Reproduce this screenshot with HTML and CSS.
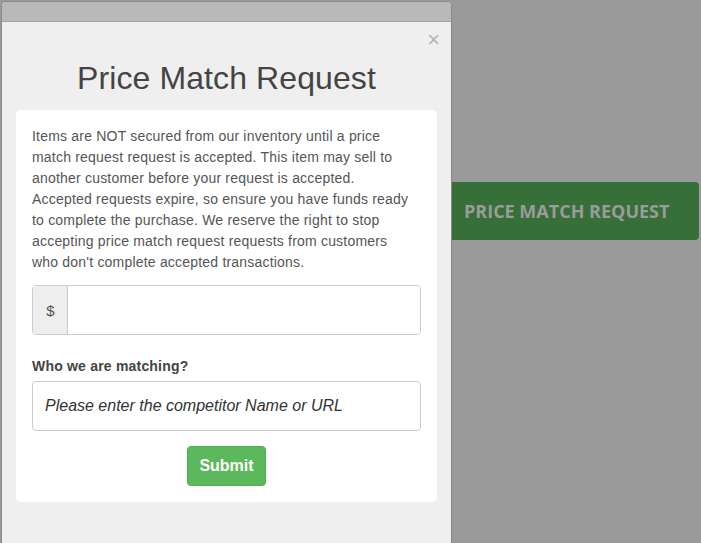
FILE: index.html
```html
<!DOCTYPE html>
<html>
<head>
<meta charset="utf-8">
<link rel="stylesheet" href="styles.css">
</head>
<body>
<div class="page">
  <div class="modal">
    <div class="modal-top"></div>
    <div class="modal-body">
      <div class="close-row"><span class="close">&times;</span></div>
      <h1 class="title">Price Match Request</h1>
      <div class="card">
        <p class="notice">Items are NOT secured from our inventory until a price match request request is accepted. This item may sell to another customer before your request is accepted. Accepted requests expire, so ensure you have funds ready to complete the purchase. We reserve the right to stop accepting price match request requests from customers who don't complete accepted transactions.</p>
        <div class="input-group">
          <span class="addon">$</span>
          <input class="field" type="text">
        </div>
        <label class="label">Who we are matching?</label>
        <input class="field text-field" type="text" placeholder="Please enter the competitor Name or URL">
        <div class="actions"><button class="submit">Submit</button></div>
      </div>
    </div>
  </div>
  <div class="bg-button">PRICE MATCH REQUEST</div>
</div>
</body>
</html>
```
FILE: styles.css
```css
html, body {
  margin: 0;
  padding: 0;
  height: 100%;
  background: #9a9a9a;
  overflow: hidden;
}
.page {
  display: flex;
  align-items: flex-start;
  font-family: "Liberation Sans", Arial, sans-serif;
}
.modal {
  width: 449px;
  margin-left: 1px;
  margin-top: 1px;
  height: 560px;
  border: 1px solid #8a8a8a;
  border-bottom: none;
  border-radius: 5px 5px 0 0;
  overflow: hidden;
  background: #efefef;
  position: relative;
  z-index: 2;
  flex-shrink: 0;
}
.modal-top {
  height: 19px;
  background: #b9b9b9;
  border-bottom: 1px solid #a3a3a3;
}
.modal-body {
  padding: 0 14px;
}
.close-row {
  display: flex;
  justify-content: flex-end;
  height: 36px;
  align-items: center;
}
.close {
  color: #b5b5b5;
  font-size: 22px;
  line-height: 20px;
  margin-right: -3px;
  margin-top: 0;
}
.title {
  margin: 0;
  text-align: center;
  font-weight: normal;
  font-size: 32px;
  line-height: 40px;
  letter-spacing: 0.1px;
  color: #444;
  height: 52px;
}
.card {
  background: #fff;
  border-radius: 5px;
  padding: 16px 16px 16px 16px;
}
.notice {
  margin: 0;
  padding-right: 6px;
  font-size: 14px;
  line-height: 21px;
  letter-spacing: 0.2px;
  color: #555;
}
.input-group {
  display: flex;
  margin-top: 12px;
  border: 1px solid #ccc;
  border-radius: 4px;
  height: 48px;
  overflow: hidden;
}
.addon {
  width: 33px;
  background: #eee;
  border-right: 1px solid #ccc;
  display: flex;
  align-items: center;
  justify-content: center;
  color: #555;
  font-size: 15px;
  padding-left: 1px;
}
.input-group .field {
  flex: 1;
  border: none;
  outline: none;
}
.label {
  display: block;
  margin-top: 21px;
  font-weight: bold;
  font-size: 14px;
  line-height: 21px;
  letter-spacing: 0.2px;
  color: #444;
}
.text-field {
  display: block;
  box-sizing: border-box;
  width: 100%;
  height: 50px;
  margin-top: 4px;
  border: 1px solid #ccc;
  border-radius: 4px;
  padding: 0 12px;
  font-family: "Liberation Sans", Arial, sans-serif;
  font-size: 16px;
  font-style: italic;
  outline: none;
}
.text-field::placeholder {
  color: #333;
  opacity: 1;
}
.actions {
  display: flex;
  justify-content: center;
  margin-top: 15px;
}
.submit {
  background: #5cb85c;
  border: 1px solid #4cae4c;
  color: #fff;
  font-family: "Liberation Sans", Arial, sans-serif;
  font-weight: bold;
  font-size: 16px;
  border-radius: 4px;
  width: 79px;
  height: 40px;
  padding: 0;
}
.bg-button {
  margin-top: 182px;
  width: 247px;
  height: 58px;
  background: #366f38;
  border-radius: 0 4px 4px 0;
  color: #9b9b9b;
  font-family: "Open Sans", sans-serif;
  font-weight: bold;
  font-size: 18px;
  display: flex;
  align-items: center;
  padding-left: 12px;
  box-sizing: border-box;
}
```
